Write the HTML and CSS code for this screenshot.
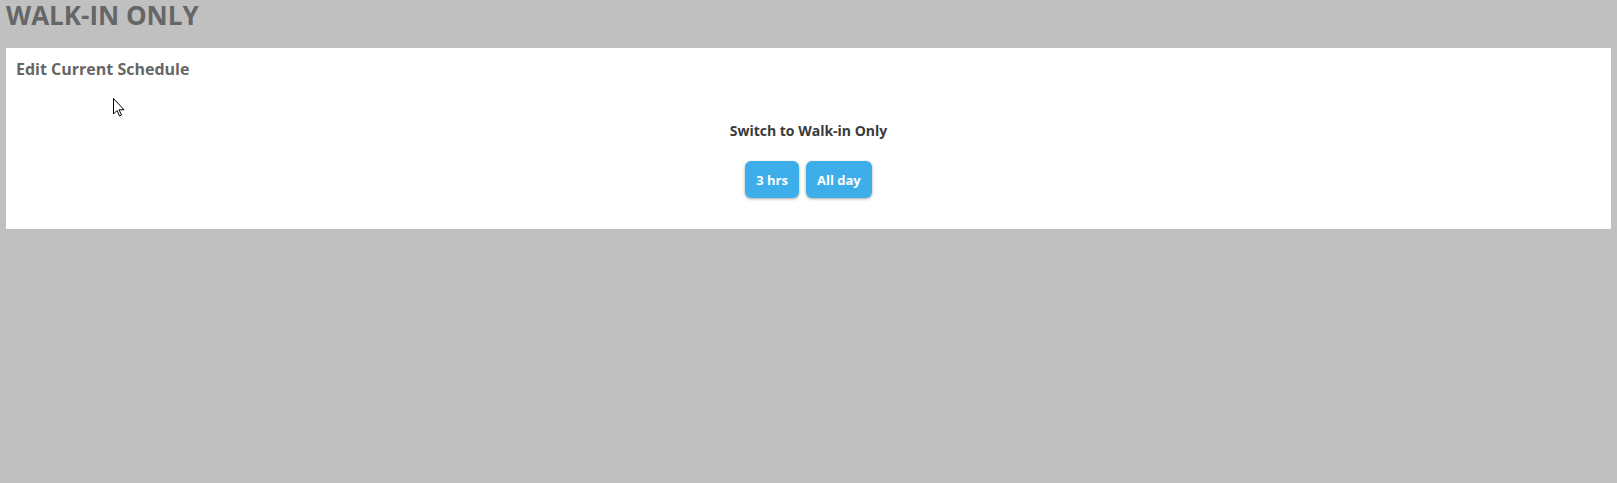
FILE: index.html
```html
<!DOCTYPE html>
<html lang="en">
<head>
<meta charset="utf-8">
<title>Walk-in Only</title>
<link rel="stylesheet" href="styles.css">
</head>
<body>
<h1 class="page-title">WALK-IN ONLY</h1>
<section class="card">
  <h2 class="card-title">Edit Current Schedule</h2>
  <div class="switch">
    <p class="switch-label">Switch to Walk-in Only</p>
    <div class="btn-row">
      <button class="btn">3 hrs</button>
      <button class="btn">All day</button>
    </div>
  </div>
</section>
<svg class="cursor" width="12" height="19" viewBox="0 0 12 19" aria-hidden="true">
  <path d="M0.5 0.5 L0.5 16 L4 12.5 L6.5 18 L8.5 17 L6 11.8 L11 11.8 Z" fill="#fff" stroke="#000" stroke-width="1" stroke-linejoin="miter"/>
</svg>
</body>
</html>
```
FILE: styles.css
```css
html, body {
  margin: 0;
  padding: 0;
}
body {
  background: #c0c0c0;
  font-family: "Open Sans", "Liberation Sans", sans-serif;
  padding: 0 6px;
  min-height: 483px;
  box-sizing: border-box;
  position: relative;
}
.page-title {
  margin: 0;
  font-size: 26px;
  line-height: 30px;
  font-weight: 700;
  color: #666666;
  padding-bottom: 18px;
}
.card {
  background: #ffffff;
  padding: 10px 10px 30px;
  height: 181px;
  box-sizing: border-box;
}
.card-title {
  margin: 0;
  font-size: 16px;
  line-height: 22px;
  font-weight: 700;
  color: #666666;
}
.switch {
  display: flex;
  flex-direction: column;
  align-items: center;
  margin-top: 41px;
}
.switch-label {
  margin: 0;
  font-size: 14px;
  line-height: 20px;
  font-weight: 700;
  color: #3a3a3a;
}
.btn-row {
  display: flex;
  gap: 7px;
  margin-top: 20px;
}
.btn {
  font-family: inherit;
  font-size: 13px;
  font-weight: 700;
  color: #ffffff;
  background: #3daee9;
  border: none;
  border-radius: 6px;
  height: 37px;
  padding: 0 11px;
  box-shadow: 0 1px 3px rgba(0, 0, 0, 0.35);
}
.cursor {
  position: absolute;
  left: 113px;
  top: 98px;
}
```
